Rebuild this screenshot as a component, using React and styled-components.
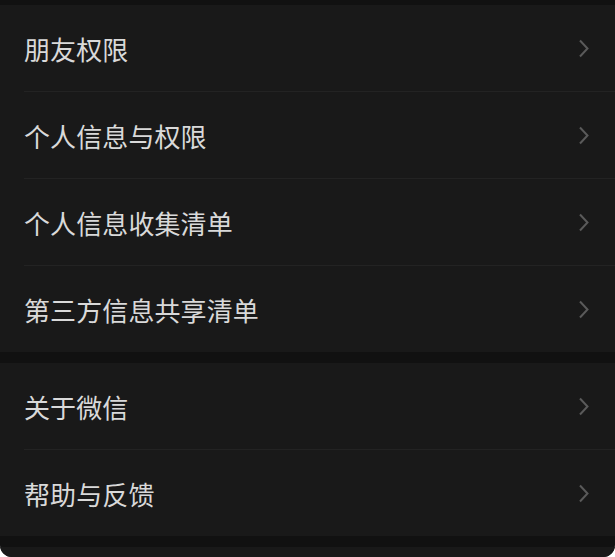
import React from "react";
import styled, { createGlobalStyle } from "styled-components";

const GlobalStyle = createGlobalStyle`
  html, body {
    margin: 0;
    padding: 0;
    background: #ffffff;
  }
`;

const Screen = styled.div`
  width: 615px;
  height: 557px;
  background: #111111;
  border-radius: 0 0 12px 12px;
  overflow: hidden;
  padding-top: 5px;
  box-sizing: border-box;
  display: flex;
  flex-direction: column;
  gap: 11px;
  font-family: "Noto Sans CJK SC", "Noto Sans", sans-serif;
`;

const Group = styled.div`
  background: #191919;
  display: flex;
  flex-direction: column;
  flex: ${(p) => (p.$fill ? "1" : "none")};
`;

const Row = styled.div`
  height: 86px;
  display: flex;
  align-items: center;
  justify-content: space-between;
  padding: 0 25px 0 24px;
  box-sizing: border-box;
`;

const Label = styled.span`
  font-size: 26px;
  color: #d9d9d9;
  letter-spacing: 0.1px;
`;

const Divider = styled.div`
  height: 1px;
  margin-left: 24px;
  background: #232323;
`;

const Chevron = () => (
  <svg width="12" height="19" viewBox="0 0 12 19">
    <polyline
      points="2,1.5 9.5,9.5 2,17.5"
      fill="none"
      stroke="#5a5a5a"
      strokeWidth="2"
    />
  </svg>
);

const groups = [
  ["朋友权限", "个人信息与权限", "个人信息收集清单", "第三方信息共享清单"],
  ["关于微信", "帮助与反馈"],
];

export default function App() {
  return (
    <>
      <GlobalStyle />
      <Screen>
        {groups.map((items, gi) => (
          <Group key={gi}>
            {items.map((text, i) => (
              <React.Fragment key={text}>
                {i > 0 && <Divider />}
                <Row>
                  <Label>{text}</Label>
                  <Chevron />
                </Row>
              </React.Fragment>
            ))}
          </Group>
        ))}
        <Group $fill />
      </Screen>
    </>
  );
}
